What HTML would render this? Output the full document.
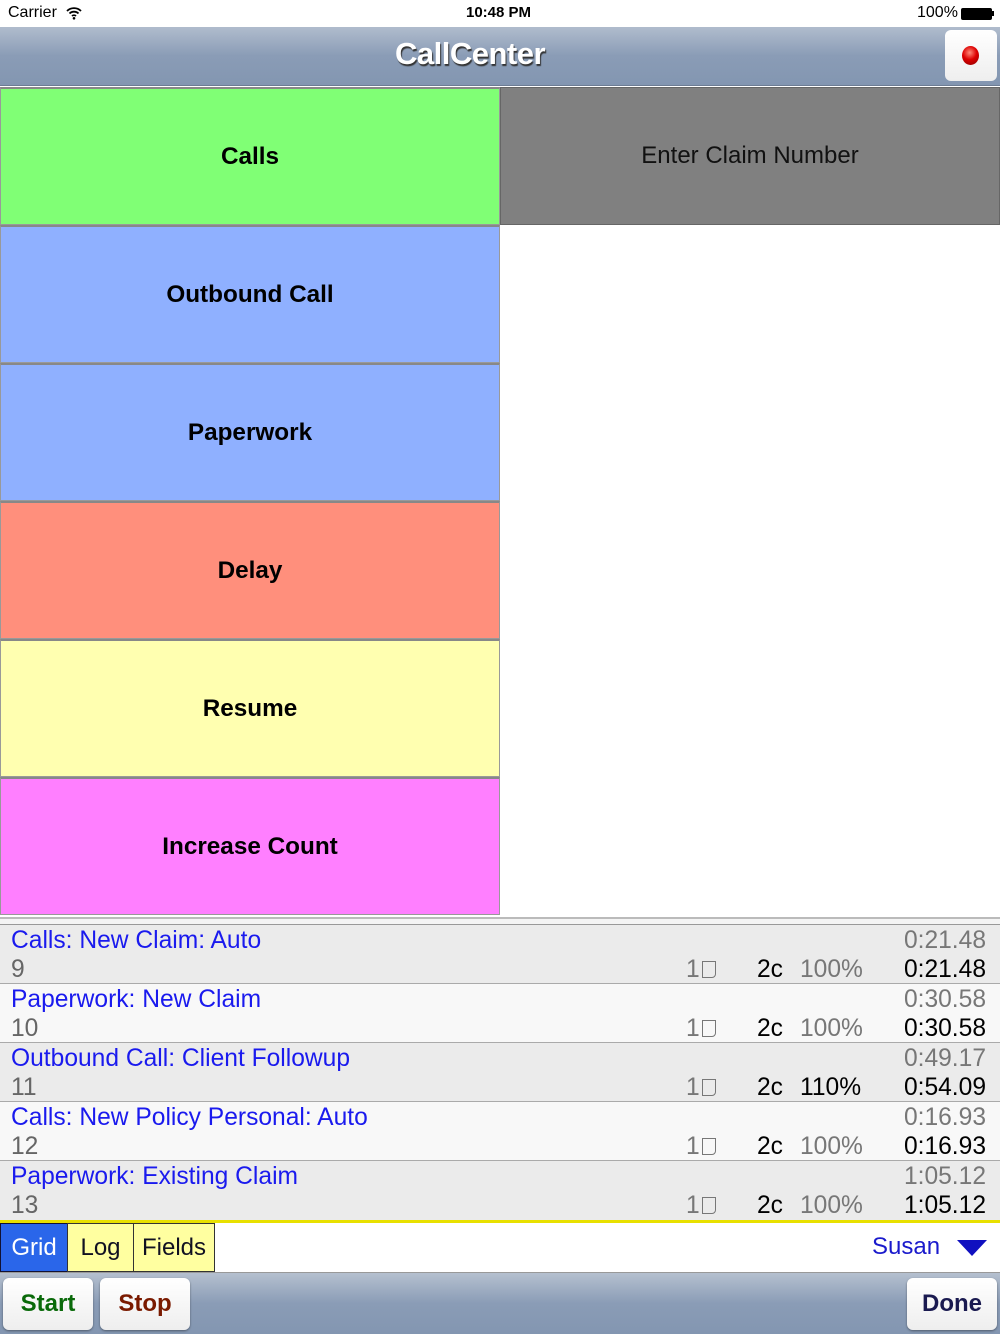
<!DOCTYPE html>
<html><head><meta charset="utf-8"><style>
*{margin:0;padding:0;box-sizing:border-box}
body{width:1000px;height:1334px;position:relative;background:#fff;font-family:"Liberation Sans",sans-serif;overflow:hidden}
.abs{position:absolute}
.status{top:0;left:0;width:1000px;height:27px;background:#fff;font-size:16px;color:#000}
.nav{top:27px;left:0;width:1000px;height:59px;background:linear-gradient(#b0bccd,#8a9cb6 50%,#8396b1);border-bottom:1px solid #6d7c93}
.btn{left:0;width:500px;height:138px;display:flex;align-items:center;justify-content:center;font-weight:bold;font-size:24.3px;border:1px solid #999;border-top:2px solid #888}
.row{left:0;width:1000px;height:59px;border-bottom:1px solid #aaa;font-size:24.6px}
.t{position:absolute;left:11px;top:2px;color:#1a1aee}
.n{position:absolute;left:11px;top:31px;color:#666}
.tt{position:absolute;right:14px;top:2px;color:#777}
.tb{position:absolute;right:14px;top:31px;color:#000}
.c1{position:absolute;left:686px;top:31px;color:#777}
.c2{position:absolute;left:757px;top:31px;color:#000}
.c3{position:absolute;left:800px;top:31px;color:#777}
.doc{display:inline-block;width:14px;height:17px;border:1.5px solid #777;border-radius:0 0 4px 0;vertical-align:-1px;margin-left:2px}
.tbtn{top:1278px;height:52px;background:linear-gradient(#fff,#eee);border-radius:6px;font-weight:bold;font-size:24px;display:flex;align-items:center;justify-content:center;box-shadow:0 1px 2px rgba(0,0,0,.4)}
</style></head><body>
<div class="abs status">
<span class="abs" style="left:8px;top:4px">Carrier</span>
<svg class="abs" style="left:66px;top:6px" width="16" height="14" viewBox="0 0 16 14"><path d="M1 5a10 10 0 0 1 14 0M3.5 7.5a6.5 6.5 0 0 1 9 0M6 10a3 3 0 0 1 4 0" stroke="#000" stroke-width="1.8" fill="none"/><circle cx="8" cy="12.3" r="1.3"/></svg>
<span class="abs" style="left:466px;top:4px;font-weight:bold;font-size:15px">10:48 PM</span>
<span class="abs" style="left:917px;top:4px">100%</span>
<div class="abs" style="left:961px;top:8px;width:31px;height:12px;background:#000;border-radius:2px"></div>
<div class="abs" style="left:992px;top:11px;width:2px;height:5px;background:#000"></div>
</div>
<div class="abs nav">
<div class="abs" style="left:0;width:940px;top:9px;text-align:center;font-weight:bold;font-size:31px;color:#fff;text-shadow:1px 2px 1px #333;letter-spacing:-0.5px">CallCenter</div>
<div class="abs" style="left:945px;top:3px;width:52px;height:51px;background:linear-gradient(#fff,#eee);border-radius:6px"></div>
<div class="abs" style="left:962px;top:19px;width:17px;height:19px;border-radius:50%;background:radial-gradient(circle at 45% 35%,#ff8a7a,#d00 45%,#800)"></div>
</div>
<div class="abs btn" style="top:87px;background:#80ff75">Calls</div>
<div class="abs btn" style="top:225px;background:#8fb0ff">Outbound Call</div>
<div class="abs btn" style="top:363px;background:#8fb0ff">Paperwork</div>
<div class="abs btn" style="top:501px;background:#ff8f7c">Delay</div>
<div class="abs btn" style="top:639px;background:#ffffb0">Resume</div>
<div class="abs btn" style="top:777px;background:#ff7fff">Increase Count</div>
<div class="abs" style="left:500px;top:87px;width:500px;height:138px;background:#808080;border:1px solid #666;display:flex;align-items:center;justify-content:center;font-size:24px;color:#111">Enter Claim Number</div>
<div class="abs" style="left:0;top:917px;width:1000px;height:8px;background:#f4f4f4;border-top:2px solid #bbb;border-bottom:1px solid #999"></div>
<div class="abs row" style="top:925px;background:#ebebeb"><span class="t">Calls: New Claim: Auto</span><span class="n">9</span><span class="tt">0:21.48</span><span class="c1">1<span class="doc"></span></span><span class="c2">2c</span><span class="c3">100%</span><span class="tb">0:21.48</span></div>
<div class="abs row" style="top:984px;background:#f8f8f8"><span class="t">Paperwork: New Claim</span><span class="n">10</span><span class="tt">0:30.58</span><span class="c1">1<span class="doc"></span></span><span class="c2">2c</span><span class="c3">100%</span><span class="tb">0:30.58</span></div>
<div class="abs row" style="top:1043px;background:#ebebeb"><span class="t">Outbound Call: Client Followup</span><span class="n">11</span><span class="tt">0:49.17</span><span class="c1">1<span class="doc"></span></span><span class="c2">2c</span><span class="c2" style="left:800px">110%</span><span class="tb">0:54.09</span></div>
<div class="abs row" style="top:1102px;background:#f8f8f8"><span class="t">Calls: New Policy Personal: Auto</span><span class="n">12</span><span class="tt">0:16.93</span><span class="c1">1<span class="doc"></span></span><span class="c2">2c</span><span class="c3">100%</span><span class="tb">0:16.93</span></div>
<div class="abs row" style="top:1161px;background:#ebebeb;border-bottom:none"><span class="t">Paperwork: Existing Claim</span><span class="n">13</span><span class="tt">1:05.12</span><span class="c1">1<span class="doc"></span></span><span class="c2">2c</span><span class="c3">100%</span><span class="tb">1:05.12</span></div>
<div class="abs" style="left:0;top:1220px;width:1000px;height:3px;background:#e8e000"></div>
<div class="abs" style="left:0;top:1223px;width:68px;height:49px;background:#2a66ea;border:1px solid #113;color:#fff;font-size:24px;display:flex;align-items:center;justify-content:center">Grid</div>
<div class="abs" style="left:67px;top:1223px;width:67px;height:49px;background:#ffffa0;border:1px solid #333;color:#112;font-size:24px;display:flex;align-items:center;justify-content:center">Log</div>
<div class="abs" style="left:133px;top:1223px;width:82px;height:49px;background:#ffffa0;border:1px solid #333;color:#112;font-size:24px;display:flex;align-items:center;justify-content:center">Fields</div>
<span class="abs" style="left:872px;top:1233px;font-size:24px;color:#1a1acc">Susan</span>
<svg class="abs" style="left:957px;top:1240px" width="30" height="16"><path d="M0 0H30L15 16Z" fill="#1010c0"/></svg>
<div class="abs" style="left:0;top:1272px;width:1000px;height:62px;background:linear-gradient(#b5c0cf,#8a9cb6 50%,#8396b1);border-top:1px solid #999"></div>
<div class="abs tbtn" style="left:3px;width:90px;color:#0a6a0a">Start</div>
<div class="abs tbtn" style="left:100px;width:90px;color:#7a1a00">Stop</div>
<div class="abs tbtn" style="left:907px;width:90px;color:#1a1a50">Done</div>
</body></html>
